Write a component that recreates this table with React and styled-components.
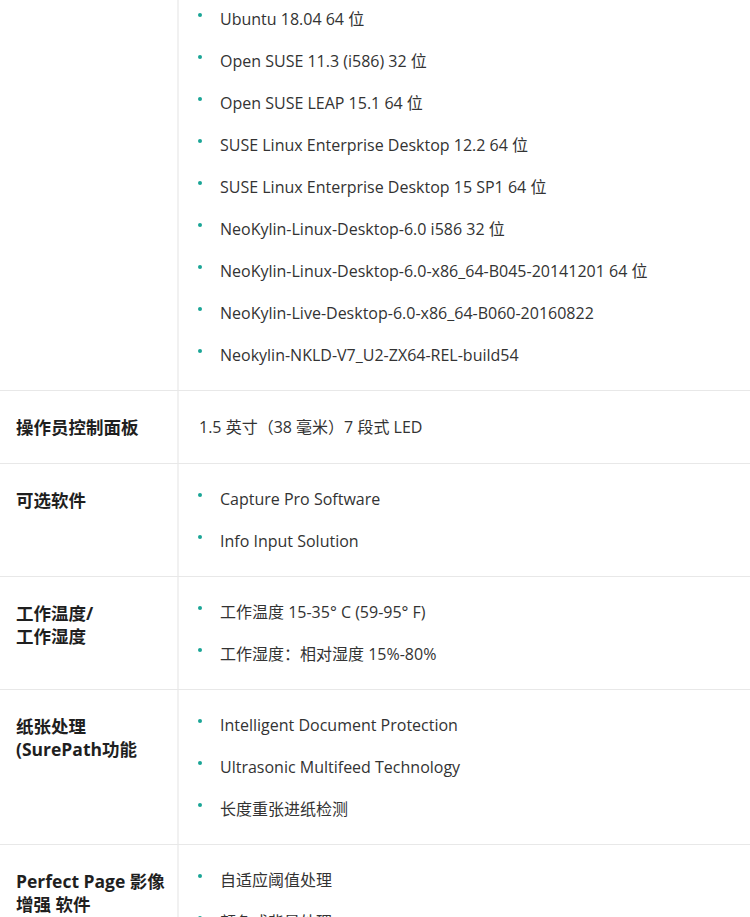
import React from 'react'
import styled,{createGlobalStyle} from 'styled-components'

var Global=createGlobalStyle`
  html,body{margin:0;padding:0;background:#fff;}
  body{
    font-family:"Open Sans","Noto Sans CJK SC",sans-serif;
    color:#333;
    overflow:hidden;
  }
`

var Table=styled.div`
  width:750px;
  margin-top:-17px;
`

var Row=styled.div`
  display:grid;
  grid-template-columns:177px 1fr;
  border-top:1px solid #e8e8e8;
`

var Label=styled.div`
  padding:25px 6px 14px 16px;
  font-size:17.5px;
  line-height:23px;
  font-weight:700;
  color:#1f1f1f;
`

var Value=styled.div`
  border-left:2px solid #f1f1f1;
  padding:14px 0 14px 20px;
  font-size:16px;
`

var Plain=styled.p`
  margin:0;
  padding:10px 0;
  line-height:24px;
`

var List=styled.ul`
  list-style:none;
  margin:0;
  padding:0;
`

var Item=styled.li`
  position:relative;
  padding:9px 0 9px 21px;
  line-height:24px;
  white-space:nowrap;
  &::before{
    content:'';
    position:absolute;
    left:-1px;
    top:15px;
    width:4px;
    height:4px;
    border-radius:50%;
    background:#1aa596;
  }
`

var rows=[
  {label:[],items:[
    'Ubuntu 18.04 64 位',
    'Open SUSE 11.3 (i586) 32 位',
    'Open SUSE LEAP 15.1 64 位',
    'SUSE Linux Enterprise Desktop 12.2 64 位',
    'SUSE Linux Enterprise Desktop 15 SP1 64 位',
    'NeoKylin-Linux-Desktop-6.0 i586 32 位',
    'NeoKylin-Linux-Desktop-6.0-x86_64-B045-20141201 64 位',
    'NeoKylin-Live-Desktop-6.0-x86_64-B060-20160822',
    'Neokylin-NKLD-V7_U2-ZX64-REL-build54'
  ]},
  {label:['操作员控制面板'],text:'1.5 英寸（38 毫米）7 段式 LED'},
  {label:['可选软件'],items:['Capture Pro Software','Info Input Solution']},
  {label:['工作温度/','工作湿度'],items:['工作温度 15-35° C (59-95° F)','工作湿度：相对湿度 15%-80%']},
  {label:['纸张处理','(SurePath功能'],items:['Intelligent Document Protection','Ultrasonic Multifeed Technology','长度重张进纸检测']},
  {label:['Perfect Page 影像','增强 软件'],items:['自适应阈值处理','颜色或背景处理']}
]

export default function App(){
  return(
    <>
      <Global/>
      <Table>
        {rows.map((r,i)=>(
          <Row key={i}>
            <Label>
              {r.label.map((l,j)=>(<React.Fragment key={j}>{j>0&&<br/>}{l}</React.Fragment>))}
            </Label>
            <Value>
              {r.text?<Plain>{r.text}</Plain>:
              <List>
                {r.items.map(t=><Item key={t}>{t}</Item>)}
              </List>}
            </Value>
          </Row>
        ))}
      </Table>
    </>
  )
}
